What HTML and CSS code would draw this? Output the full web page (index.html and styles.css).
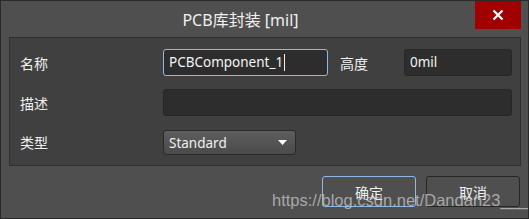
FILE: index.html
```html
<!DOCTYPE html>
<html lang="zh-CN">
<head>
  <meta charset="UTF-8">
  <title>PCB库封装 [mil]</title>
  <link rel="stylesheet" href="styles.css">
</head>
<body>
  <div class="dialog">
    <div class="titlebar">
      <div class="title">PCB库封装 [mil]</div>
      <button class="close-btn" aria-label="关闭">
        <svg width="12" height="12" viewBox="0 0 12 12"><path d="M1.5 1.5 L10.5 10.5 M10.5 1.5 L1.5 10.5" stroke="#fff" stroke-width="2.2"/></svg>
      </button>
    </div>
    <div class="panel">
      <label class="field-label">名称</label>
      <div class="input focused">PCBComponent_1<span class="caret"></span></div>
      <label class="field-label side">高度</label>
      <div class="input">0mil</div>

      <label class="field-label">描述</label>
      <div class="input wide"></div>

      <label class="field-label">类型</label>
      <div class="select">
        <span>Standard</span>
        <svg width="9" height="5" viewBox="0 0 9 5"><path d="M0 0 L9 0 L4.5 5 Z" fill="#fff"/></svg>
      </div>
    </div>
    <div class="footer">
      <button class="btn primary">确定</button>
      <button class="btn">取消</button>
    </div>
    <div class="watermark">https://blog.csdn.net/Dandan23___</div>
  </div>
</body>
</html>
```
FILE: styles.css
```css
body {
  margin: 0;
  padding: 0;
  background: #4f4f4f;
  font-family: 'Noto Sans', 'Noto Sans CJK SC', sans-serif;
  color: #f0f0f0;
}
.dialog {
  position: relative;
  width: 529px;
  height: 219px;
  box-sizing: border-box;
  border: 1px solid #2a2a2a;
  background: #4f4f4f;
  overflow: hidden;
}
.titlebar {
  display: flex;
  height: 36px;
  padding-right: 7px;
}
.title {
  flex: 1;
  text-align: center;
  font-size: 16px;
  line-height: 38px;
  padding-left: 5px;
}
.close-btn {
  width: 46px;
  height: 28px;
  border: none;
  background: #a00000;
  display: flex;
  align-items: center;
  justify-content: center;
  padding: 0;
}
.panel {
  margin: 0 7px 0 8px;
  height: 129px;
  box-sizing: border-box;
  border: 1px solid #2f2f2f;
  background: #404040;
  padding: 11px 8px 0 10px;
  display: grid;
  grid-template-columns: 143px 165px 1fr 108px;
  grid-template-rows: 27px 27px 25px;
  row-gap: 13px;
  align-items: center;
}
.field-label {
  font-size: 14px;
}
.field-label.side {
  padding-left: 12px;
}
.input {
  height: 27px;
  box-sizing: border-box;
  border: 1px solid #262626;
  border-radius: 3px;
  background: #2d2d2d;
  font-size: 13.5px;
  line-height: 25px;
  padding-left: 5px;
  color: #f4f4f4;
}
.input.focused {
  border-color: #8fb8e6;
}
.input.wide {
  grid-column: 2 / 5;
}
.caret {
  display: inline-block;
  width: 1px;
  height: 17px;
  background: #f0f0f0;
  vertical-align: -4px;
  margin-left: 1px;
}
.select {
  grid-row: 3;
  grid-column: 2;
  width: 133px;
  height: 25px;
  box-sizing: border-box;
  border: 1px solid #2a2a2a;
  border-radius: 3px;
  background: linear-gradient(#5e5e5e, #4a4a4a);
  display: flex;
  align-items: center;
  justify-content: space-between;
  padding: 0 8px 0 5px;
  font-size: 13.5px;
  margin-top: 2px;
}
.footer {
  display: flex;
  justify-content: flex-end;
  gap: 10px;
  padding: 10px 8px 0 0;
}
.btn {
  width: 94px;
  height: 31px;
  border: 1px solid #262626;
  border-radius: 3px;
  background: #4f4f4f;
  color: #f0f0f0;
  font-family: 'Noto Sans', 'Noto Sans CJK SC', sans-serif;
  font-size: 14px;
  padding: 0;
}
.btn.primary {
  border-color: #8fb8e6;
}
.watermark {
  position: absolute;
  left: 271px;
  top: 190px;
  white-space: nowrap;
  font-family: 'Liberation Sans', Arial, sans-serif;
  font-size: 16.5px;
  color: rgba(205, 205, 205, 0.72);
  pointer-events: none;
}
```
